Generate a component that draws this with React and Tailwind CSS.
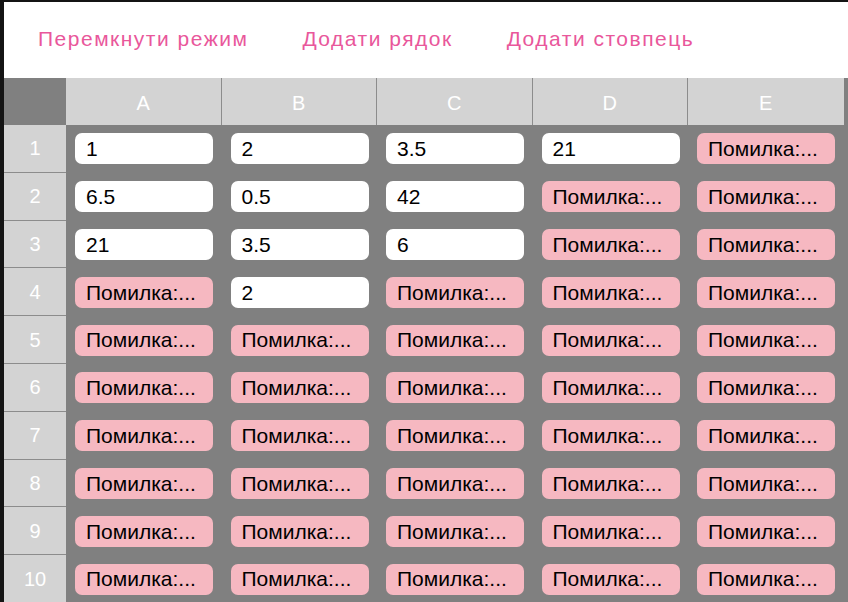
import React from "react";

const cols = ["A", "B", "C", "D", "E"];
const E = null;
const data = [
  ["1", "2", "3.5", "21", E],
  ["6.5", "0.5", "42", E, E],
  ["21", "3.5", "6", E, E],
  [E, "2", E, E, E],
  [E, E, E, E, E],
  [E, E, E, E, E],
  [E, E, E, E, E],
  [E, E, E, E, E],
  [E, E, E, E, E],
  [E, E, E, E, E],
];

function Cell({ v }) {
  const err = v === null;
  return (
    <div className="h-[47.8px] pl-[9px] pr-[8.5px] flex items-center">
      <div
        className={
          "w-full h-[31px] rounded-[7px] flex items-center pl-[11px] text-[21px] text-black " +
          (err ? "bg-[#f6b8c1]" : "bg-white")
        }
      >
        {err ? "Помилка:..." : v}
      </div>
    </div>
  );
}

export default function App() {
  return (
    <div
      className="w-[848px] h-[602px] overflow-hidden bg-[#808080] border-l-4 border-t-2 border-[#141414] flex flex-col"
      style={{ fontFamily: '"Liberation Sans", Arial, sans-serif' }}
    >
      <div className="h-[76px] shrink-0 bg-white flex items-center pl-[34px] gap-[54px] text-[21px] tracking-[1.5px] text-[#e9579b] pb-[2px]">
        <span>Перемкнути режим</span>
        <span>Додати рядок</span>
        <span>Додати стовпець</span>
      </div>
      <div className="grid grid-cols-[62px_repeat(5,155.5px)] bg-[#808080]">
        <div className="h-[47px] bg-[#808080]" />
        {cols.map((c, i) => (
          <div
            key={c}
            className={
              "h-[47px] bg-[#d3d3d3] flex items-center justify-center text-white text-[20px] pt-[2px] " +
              (i < 4 ? "border-r border-[#8c8c8c]" : "")
            }
          >
            {c}
          </div>
        ))}
        {data.map((row, r) => (
          <React.Fragment key={r}>
            <div className="h-[47.8px] bg-[#d3d3d3] border-b border-[#8c8c8c] flex items-center justify-center text-white text-[20px]">
              {r + 1}
            </div>
            {row.map((v, c) => (
              <Cell key={c} v={v} />
            ))}
          </React.Fragment>
        ))}
      </div>
    </div>
  );
}
